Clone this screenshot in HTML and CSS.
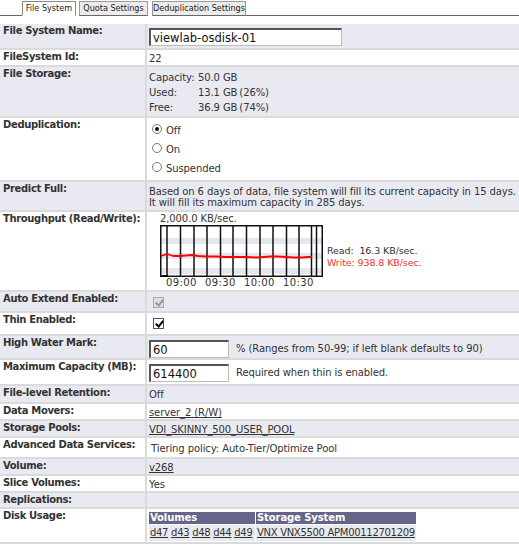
FILE: index.html
```html
<!DOCTYPE html>
<html lang="en">
<head>
    <meta charset="UTF-8">
    <title>File System Properties</title>
    <link rel="stylesheet" href="styles.css">
</head>
<body>
    <div class="tabs">
        <span class="tab-lead"></span>
        <span class="tab active tab-fs">File System</span>
        <span class="tab tab-quota">Quota Settings</span>
        <span class="tab tab-dedup">Deduplication Settings</span>
        <span class="tab-fill"></span>
    </div>

    <table class="props">
        <tr class="alt">
            <th>File System Name:</th>
            <td class="pad-input tall"><input class="text wide" type="text" value="viewlab-osdisk-01"></td>
        </tr>
        <tr>
            <th>FileSystem Id:</th>
            <td>22</td>
        </tr>
        <tr class="alt">
            <th>File Storage:</th>
            <td class="pad-storage">
                <table class="storage">
                    <tr><td>Capacity:</td><td>50.0 GB</td><td></td></tr>
                    <tr><td>Used:</td><td class="num">13.1 GB</td><td>(26%)</td></tr>
                    <tr><td>Free:</td><td class="num">36.9 GB</td><td>(74%)</td></tr>
                </table>
            </td>
        </tr>
        <tr>
            <th>Deduplication:</th>
            <td class="pad-radio">
                <div class="radios">
                    <label><span class="radio on"></span>Off</label>
                    <label><span class="radio"></span>On</label>
                    <label><span class="radio"></span>Suspended</label>
                </div>
            </td>
        </tr>
        <tr class="alt">
            <th>Predict Full:</th>
            <td class="predict">Based on 6 days of data, file system will fill its current capacity in 15 days.<br>It will fill its maximum capacity in 285 days.</td>
        </tr>
        <tr>
            <th>Throughput (Read/Write):</th>
            <td class="pad-chart">
                <div class="throughput">
                    <div class="chart">
                        <div class="chart-max">2,000.0 KB/sec.</div>
                        <svg width="163" height="52" viewBox="0 0 163 52">
                            <rect x="0" y="0" width="163" height="52" fill="#fff"/>
                            <rect x="1" y="13" width="161" height="6" fill="#e6e6ee"/>
                            <rect x="1" y="28" width="161" height="6" fill="#e6e6ee"/>
                            <rect x="1" y="43" width="161" height="6" fill="#e6e6ee"/>
                            <g stroke="#111" stroke-width="1.5">
                                <line x1="7" y1="0" x2="7" y2="52"/>
                                <line x1="20.5" y1="0" x2="20.5" y2="52"/>
                                <line x1="34" y1="0" x2="34" y2="52"/>
                                <line x1="47" y1="0" x2="47" y2="52"/>
                                <line x1="60.5" y1="0" x2="60.5" y2="52"/>
                                <line x1="73" y1="0" x2="73" y2="52"/>
                                <line x1="86.5" y1="0" x2="86.5" y2="52"/>
                                <line x1="100" y1="0" x2="100" y2="52"/>
                                <line x1="113" y1="0" x2="113" y2="52"/>
                                <line x1="126.5" y1="0" x2="126.5" y2="52"/>
                                <line x1="139" y1="0" x2="139" y2="52"/>
                                <line x1="151.5" y1="0" x2="151.5" y2="52"/>
                                <line x1="156.5" y1="0" x2="156.5" y2="52"/>
                            </g>
                            <rect x="0.75" y="0.75" width="161.5" height="50.5" fill="none" stroke="#111" stroke-width="1.5"/>
                            <polyline fill="none" stroke="#f00" stroke-width="1.8"
                                points="1,31 4,30 7,29 10,30 14,31 20,31 26,30.5 32,30 38,31 46,31.5 56,31.5 66,32 76,32 86,32 96,32.5 104,32 110,31.5 118,31.5 126,32 134,32.5 142,32.5 148,32 152,32"/>
                            <line x1="2" y1="51" x2="8" y2="51" stroke="#000" stroke-width="2"/>
                        </svg>
                        <div class="chart-times">
                            <span>09:00</span><span>09:30</span><span>10:00</span><span>10:30</span>
                        </div>
                    </div>
                    <div class="legend">
                        <div>Read:&nbsp; 16.3 KB/sec.</div>
                        <div class="write">Write: 938.8 KB/sec.</div>
                    </div>
                </div>
            </td>
        </tr>
        <tr class="alt">
            <th>Auto Extend Enabled:</th>
            <td class="pad-check"><span class="check disabled"></span></td>
        </tr>
        <tr>
            <th>Thin Enabled:</th>
            <td class="pad-check thin"><span class="check"></span></td>
        </tr>
        <tr class="alt">
            <th>High Water Mark:</th>
            <td class="pad-input"><input class="text short" type="text" value="60"><span class="hint">% (Ranges from 50-99; if left blank defaults to 90)</span></td>
        </tr>
        <tr>
            <th>Maximum Capacity (MB):</th>
            <td class="pad-input tall"><input class="text short" type="text" value="614400"><span class="hint">Required when thin is enabled.</span></td>
        </tr>
        <tr class="alt">
            <th>File-level Retention:</th>
            <td class="pad-plus">Off</td>
        </tr>
        <tr>
            <th>Data Movers:</th>
            <td><a href="#">server_2 (R/W)</a></td>
        </tr>
        <tr class="alt">
            <th>Storage Pools:</th>
            <td><a href="#">VDI_SKINNY_500_USER_POOL</a></td>
        </tr>
        <tr>
            <th>Advanced Data Services:</th>
            <td class="indent">Tiering policy: Auto-Tier/Optimize Pool</td>
        </tr>
        <tr class="alt">
            <th>Volume:</th>
            <td><a href="#">v268</a></td>
        </tr>
        <tr>
            <th>Slice Volumes:</th>
            <td>Yes</td>
        </tr>
        <tr class="alt">
            <th>Replications:</th>
            <td></td>
        </tr>
        <tr>
            <th>Disk Usage:</th>
            <td class="pad-disks">
                <table class="disks">
                    <tr><th class="col-vol">Volumes</th><th>Storage System</th></tr>
                    <tr>
                        <td><a href="#">d47</a> <a href="#">d43</a> <a href="#">d48</a> <a href="#">d44</a> <a href="#">d49</a></td>
                        <td><a href="#">VNX VNX5500 APM00112701209</a></td>
                    </tr>
                </table>
            </td>
        </tr>
    </table>
</body>
</html>
```

FILE: styles.css
```css
:root {
    --row-alt: #e9e9f1;
    --rule: #dadada;
    --text: #333;
    --head: #65658a;
}

body {
    margin: 0;
    width: 519px;
    font-family: "DejaVu Sans", Verdana, sans-serif;
    font-size: 10px;
    color: var(--text);
    background: #fff;
}

/* tab strip */
.tabs {
    display: flex;
    align-items: flex-end;
    height: 16px;
    font-family: "DejaVu Sans Condensed", "Liberation Sans", sans-serif;
    font-size: 9px;
}

.tab-lead {
    width: 22px;
    border-bottom: 1px solid #666;
}

.tab-fill {
    flex: 1;
    border-bottom: 1px solid #666;
}

.tab {
    box-sizing: border-box;
    height: 15px;
    line-height: 13px;
    text-align: center;
    border: 1px solid #999;
    border-bottom: 1px solid #666;
    background: #ececec;
    color: #222;
    white-space: nowrap;
}

.tab-fs { width: 54px; }
.tab-quota { width: 69px; margin-left: 3px; }
.tab-dedup { width: 94px; margin-left: 4px; }

.tab.active {
    background: #fff;
    border-color: #888;
    border-bottom-color: #fff;
}

/* property table */
.props {
    width: 519px;
    margin-top: 8px;
    border-collapse: collapse;
}

.props > tbody > tr > th,
.props > tbody > tr > td {
    vertical-align: top;
    border-bottom: 2px solid var(--rule);
    line-height: 12px;
}

.props > tbody > tr > th {
    width: 140px;
    padding: 1px 2px 1px 3px;
    text-align: left;
    font-weight: bold;
    letter-spacing: -0.35px;
    white-space: nowrap;
    border-right: 2px solid var(--rule);
}

.props > tbody > tr > td {
    padding: 3px 0 0 2px;
    letter-spacing: -0.1px;
    white-space: nowrap;
}

.props tr.alt > th,
.props tr.alt > td {
    background: var(--row-alt);
}

.props td.indent {
    padding: 5px 0 2px 4px;
}

.props td.pad-plus {
    padding-bottom: 1px;
}

.props td.pad-input {
    padding-top: 4px;
}

.props td.pad-input.tall {
    padding-bottom: 2px;
}

.props td.pad-storage {
    padding-bottom: 1px;
}

.props td.pad-check {
    padding: 5px 0 3px 6px;
}

.props td.pad-check.thin {
    padding-bottom: 5px;
}

.props td.pad-radio {
    padding: 3px 0 2px 5px;
}

.props td.predict {
    padding: 4px 0 2px 2px;
    line-height: 11px;
}

.props td.pad-chart {
    padding: 1px 0 1px 13px;
}

.props td.pad-disks {
    padding: 2px 0 0 1px;
}

a {
    color: var(--text);
}

input.text {
    box-sizing: border-box;
    height: 18px;
    margin: 0;
    padding: 0 2px;
    font-family: "DejaVu Sans", Verdana, sans-serif;
    font-size: 11.5px;
    color: #111;
    background: #fff;
    border: 1px solid #bbb;
    border-top: 2px solid #555;
    border-left: 2px solid #555;
    vertical-align: top;
}

input.wide {
    width: 193px;
}

input.short {
    width: 80px;
}

.hint {
    display: inline-block;
    margin-left: 7px;
    line-height: 18px;
}

/* file storage */
.storage {
    border-collapse: collapse;
}

.storage td {
    padding: 0;
    line-height: 15px;
    white-space: nowrap;
}

.storage td:first-child {
    width: 49px;
}

.storage td:last-child {
    padding-left: 2px;
}

/* radios */
.radios label {
    display: flex;
    align-items: center;
    height: 19px;
}

.radio {
    box-sizing: border-box;
    width: 10px;
    height: 10px;
    margin-right: 4px;
    margin-top: -4px;
    border-radius: 50%;
    border: 1px solid #777;
    background: #fff;
    position: relative;
}

.radio.on::after {
    content: "";
    position: absolute;
    left: 2px;
    top: 2px;
    width: 4px;
    height: 4px;
    border-radius: 50%;
    background: #111;
}

/* throughput chart */
.throughput {
    display: flex;
    align-items: flex-start;
}

.chart-max {
    line-height: 12px;
}

.chart svg {
    display: block;
}

.chart-times {
    display: flex;
    padding-left: 6px;
    line-height: 12px;
    letter-spacing: 0.4px;
}

.chart-times span {
    width: 39px;
}

.legend {
    margin: 32px 0 0 4px;
    font-size: 9.5px;
    line-height: 12px;
}

.legend .write {
    color: #e33;
}

/* checkboxes */
.check {
    display: block;
    box-sizing: border-box;
    width: 11px;
    height: 11px;
    border: 1px solid #555;
    background: #fff;
    position: relative;
}

.check::after {
    content: "";
    position: absolute;
    left: 3px;
    top: 0;
    width: 3px;
    height: 6px;
    border: solid #000;
    border-width: 0 2px 2px 0;
    transform: rotate(40deg);
}

.check.disabled {
    border-color: #aaa;
    background: #ddd;
}

.check.disabled::after {
    border-color: #999;
}

/* disk usage */
.disks {
    border-collapse: separate;
    border-spacing: 1px;
}

.disks th {
    background: var(--head);
    color: #fff;
    text-align: left;
    font-weight: bold;
    padding: 0 1px;
    line-height: 12px;
}

.disks th.col-vol {
    width: 104px;
}

.disks td {
    background: var(--row-alt);
    padding: 2px 1px;
    line-height: 12px;
    letter-spacing: -0.3px;
}
```
